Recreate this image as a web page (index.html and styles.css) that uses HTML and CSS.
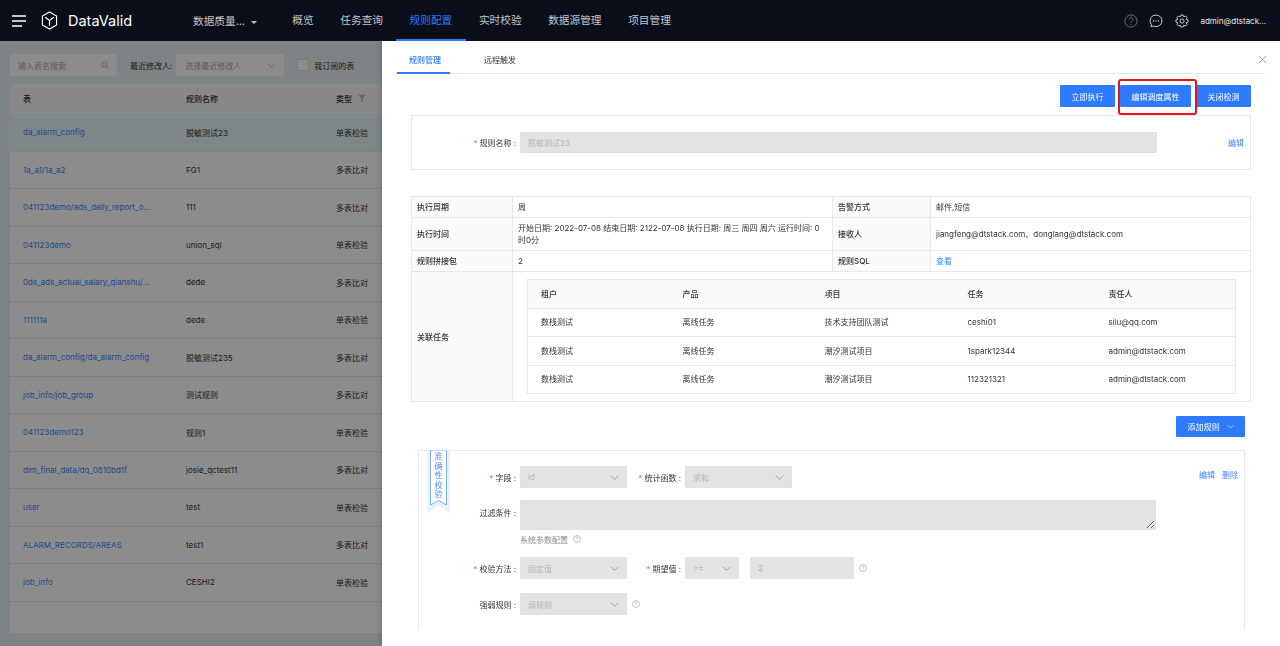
FILE: index.html
```html
<!DOCTYPE html>
<html lang="en">
<head>
    <meta charset="UTF-8">
    <title>DataValid</title>
    <link rel="stylesheet" href="styles.css">
</head>
<body>
    <svg class="sprites" width="0" height="0">
        <symbol id="help" viewBox="0 0 16 16">
            <circle cx="8" cy="8" r="7" fill="none" stroke="currentColor" stroke-width="1"/>
            <path d="M5.9 6.3a2.1 2.1 0 1 1 3.3 1.700c-.8.5-1.200.9-1.200 1.800" fill="none" stroke="currentColor" stroke-width="1"/>
            <circle cx="8" cy="11.800" r=".7" fill="currentColor"/>
        </symbol>
        <symbol id="chevron" viewBox="0 0 12 12">
            <path d="M1 3.500l5 5 5-5" fill="none" stroke="currentColor" stroke-width="1"/>
        </symbol>
    </svg>

    <header class="topbar">
        <svg class="hamburger" viewBox="0 0 14 12" width="14" height="12">
            <path d="M0 1h14M0 6h14M0 11h10" stroke="#fff" stroke-width="1.300"/>
        </svg>
        <svg class="logo" viewBox="0 0 18 20" width="17" height="19">
            <path d="M9 1l7.500 4.300v9.400L9 19l-7.500-4.300V5.300z" fill="none" stroke="#fff" stroke-width="1.200"/>
            <path d="M4.500 6.500L9 10l4.500-3.500M9 10v5.500" fill="none" stroke="#fff" stroke-width="1.200"/>
        </svg>
        <span class="brand">DataValid</span>
        <div class="project-switch">数据质量...<i class="caret"></i></div>
        <nav class="menu">
            <a>概览</a>
            <a>任务查询</a>
            <a class="active">规则配置</a>
            <a>实时校验</a>
            <a>数据源管理</a>
            <a>项目管理</a>
        </nav>
        <div class="tools">
            <svg class="tool" width="14" height="14"><use href="#help"/></svg>
            <svg class="tool" viewBox="0 0 16 16" width="14" height="14">
                <path d="M8 1.200a6.800 6.600 0 0 1 0 13.200c-1.100 0-2.100-.2-3-.7l-2.800.9.700-2.500A6.500 6.500 0 0 1 8 1.200z" fill="none" stroke="currentColor" stroke-width="1.100"/>
                <circle cx="5.200" cy="8" r=".8" fill="currentColor"/>
                <circle cx="8" cy="8" r=".8" fill="currentColor"/>
                <circle cx="10.800" cy="8" r=".8" fill="currentColor"/>
            </svg>
            <svg class="tool" viewBox="0 0 16 16" width="14" height="14">
                <polygon points="14.89,9.22 12.8,9.99 13.73,12.02 12.02,13.73 9.99,12.8 9.22,14.89 6.78,14.89 6.01,12.8 3.98,13.73 2.27,12.02 3.2,9.99 1.11,9.22 1.11,6.78 3.2,6.01 2.27,3.98 3.98,2.27 6.01,3.2 6.78,1.11 9.22,1.11 9.99,3.2 12.02,2.27 13.73,3.98 12.8,6.01 14.89,6.78" fill="none" stroke="currentColor" stroke-width="1.100" stroke-linejoin="round"/>
                <circle cx="8" cy="8" r="2.400" fill="none" stroke="currentColor" stroke-width="1.100"/>
            </svg>
            <span class="user">admin@dtstack...</span>
        </div>
    </header>

    <main class="page">
        <div class="filters">
            <div class="search">
                <span>输入表名搜索</span>
                <svg viewBox="0 0 12 12" width="8" height="8"><circle cx="5" cy="5" r="4" fill="none" stroke="currentColor" stroke-width="1.200"/><path d="M8 8l3.500 3.500" stroke="currentColor" stroke-width="1.200"/></svg>
            </div>
            <label class="filter-label">最近修改人:</label>
            <div class="filter-select">
                <span>选择最近修改人</span>
                <svg width="9" height="9"><use href="#chevron"/></svg>
            </div>
            <i class="checkbox"></i>
            <span class="filter-label">我订阅的表</span>
        </div>
        <div class="rule-list">
            <div class="rule-row head">
                <span class="col-table">表</span>
                <span class="col-name">规则名称</span>
                <span>类型</span>
                <svg class="filter-icon" viewBox="0 0 10 10" width="8" height="8"><path d="M0 1h10L6 5.500V10H4V5.500z" fill="#bfbfbf"/></svg>
            </div>
            <div class="rule-row selected"><a class="col-table">da_alarm_config</a><span class="col-name">脱敏测试23</span><span>单表检验</span></div>
            <div class="rule-row"><a class="col-table">1a_a1/1a_a2</a><span class="col-name">FG1</span><span>多表比对</span></div>
            <div class="rule-row"><a class="col-table">041123demo/ads_daily_report_o...</a><span class="col-name">111</span><span>多表比对</span></div>
            <div class="rule-row"><a class="col-table">041123demo</a><span class="col-name">union_sql</span><span>单表检验</span></div>
            <div class="rule-row"><a class="col-table">0ds_ads_actual_salary_qianshu/...</a><span class="col-name">dede</span><span>多表比对</span></div>
            <div class="rule-row"><a class="col-table">111111a</a><span class="col-name">dede</span><span>单表检验</span></div>
            <div class="rule-row"><a class="col-table">da_alarm_config/da_alarm_config</a><span class="col-name">脱敏测试235</span><span>多表比对</span></div>
            <div class="rule-row"><a class="col-table">job_info/job_group</a><span class="col-name">测试规则</span><span>多表比对</span></div>
            <div class="rule-row"><a class="col-table">041123demo123</a><span class="col-name">规则1</span><span>单表检验</span></div>
            <div class="rule-row"><a class="col-table">dim_final_data/dq_0810bd1f</a><span class="col-name">josie_qctest11</span><span>多表比对</span></div>
            <div class="rule-row"><a class="col-table">user</a><span class="col-name">test</span><span>单表检验</span></div>
            <div class="rule-row"><a class="col-table">ALARM_RECORDS/AREAS</a><span class="col-name">test1</span><span>多表比对</span></div>
            <div class="rule-row"><a class="col-table">job_info</a><span class="col-name">CESHI2</span><span>单表检验</span></div>
        </div>
    </main>
    <div class="mask"></div>

    <aside class="drawer">
        <div class="tabs">
            <a class="tab active">规则管理</a>
            <a class="tab">远程触发</a>
            <svg class="close" viewBox="0 0 10 10" width="9" height="9"><path d="M1 1l8 8M9 1l-8 8" stroke="#999" stroke-width="1"/></svg>
        </div>
        <div class="drawer-body">
            <div class="actions">
                <button class="btn">立即执行</button>
                <button class="btn wide">编辑调度属性</button>
                <button class="btn">关闭检测</button>
                <span class="highlight"></span>
            </div>

            <section class="name-card">
                <label class="field-label name-label"><em>*</em> 规则名称 :</label>
                <div class="disabled-box name-input">脱敏测试23</div>
                <a class="link name-edit">编辑</a>
            </section>

            <table class="info">
                <colgroup><col class="c1"><col class="c2"><col class="c3"><col></colgroup>
                <tr>
                    <th>执行周期</th><td>周</td>
                    <th>告警方式</th><td>邮件,短信</td>
                </tr>
                <tr>
                    <th>执行时间</th><td>开始日期: 2022-07-08 结束日期: 2122-07-08 执行日期: 周三 周四 周六 运行时间: 0时0分</td>
                    <th>接收人</th><td>jiangfeng@dtstack.com、donglang@dtstack.com</td>
                </tr>
                <tr>
                    <th>规则拼接包</th><td>2</td>
                    <th>规则SQL</th><td><a class="link">查看</a></td>
                </tr>
                <tr>
                    <th>关联任务</th>
                    <td colspan="3" class="nested">
                        <table class="tasks">
                            <colgroup><col class="t1"><col class="t1"><col class="t2"><col class="t3"><col></colgroup>
                            <tr class="tasks-head"><th>租户</th><th>产品</th><th>项目</th><th>任务</th><th>责任人</th></tr>
                            <tr><td>数栈测试</td><td>离线任务</td><td>技术支持团队测试</td><td>ceshi01</td><td>silu@qq.com</td></tr>
                            <tr><td>数栈测试</td><td>离线任务</td><td>潮汐测试项目</td><td>1spark12344</td><td>admin@dtstack.com</td></tr>
                            <tr><td>数栈测试</td><td>离线任务</td><td>潮汐测试项目</td><td>112321321</td><td>admin@dtstack.com</td></tr>
                        </table>
                    </td>
                </tr>
            </table>

            <div class="add-row">
                <button class="btn add">添加规则<svg width="7" height="7"><use href="#chevron"/></svg></button>
            </div>

            <section class="rule-card">
                <div class="ribbon">
                    <svg viewBox="0 0 23 63" width="23" height="63">
                        <polygon points="0,0 23,0 23,63 11.500,56 0,63" fill="#e8f3ff"/>
                        <path d="M3.500 0V55L11.500 50.500L19.500 55V0z" fill="#fff" stroke="#7db0ff" stroke-width="1"/>
                    </svg>
                    <span>准确性校验</span>
                </div>
                <div class="rule-links"><a class="link">编辑</a><a class="link">删除</a></div>

                <div class="form-row first">
                    <label class="field-label"><em>*</em> 字段 :</label>
                    <div class="disabled-box select">id<svg width="9" height="9"><use href="#chevron"/></svg></div>
                    <label class="field-label second"><em>*</em> 统计函数 :</label>
                    <div class="disabled-box select">求和<svg width="9" height="9"><use href="#chevron"/></svg></div>
                </div>
                <div class="form-row top">
                    <label class="field-label">过滤条件 :</label>
                    <textarea class="filter-area" disabled></textarea>
                </div>
                <div class="sys-config">系统参数配置<svg class="hint" width="8" height="8"><use href="#help"/></svg></div>
                <div class="form-row third">
                    <label class="field-label"><em>*</em> 校验方法 :</label>
                    <div class="disabled-box select">固定值<svg width="9" height="9"><use href="#chevron"/></svg></div>
                    <label class="field-label second"><em>*</em> 期望值 :</label>
                    <div class="disabled-box select small">&gt;=<svg width="9" height="9"><use href="#chevron"/></svg></div>
                    <div class="disabled-box value">2</div>
                    <svg class="hint" width="8" height="8"><use href="#help"/></svg>
                </div>
                <div class="form-row">
                    <label class="field-label">强弱规则 :</label>
                    <div class="disabled-box select">弱规则<svg width="9" height="9"><use href="#chevron"/></svg></div>
                    <svg class="hint" width="8" height="8"><use href="#help"/></svg>
                </div>
            </section>
        </div>
    </aside>
</body>
</html>
```

FILE: styles.css
```css
html, body {
    height: 100%;
    margin: 0;
    overflow: hidden;
}
body {
    font-family: Inter, "Noto Sans CJK SC", sans-serif;
    font-size: 8px;
    color: #333;
    background-color: #e5eff2;
}
.sprites {
    position: absolute;
}

/* top bar */
.topbar {
    display: flex;
    align-items: center;
    height: 41px;
    background-color: #0a0e1a;
    color: #c4c6cb;
    position: relative;
    z-index: 3;
}
.hamburger {
    margin-left: 12px;
}
.logo {
    margin-left: 15px;
}
.brand {
    margin-left: 10px;
    width: 66px;
    font-size: 14.5px;
    color: #fff;
}
.project-switch {
    margin-left: 59px;
    width: 86px;
    font-size: 10.67px;
    white-space: nowrap;
}
.caret {
    display: inline-block;
    margin-left: 6px;
    vertical-align: middle;
    border: 3px solid transparent;
    border-top: 3px solid #c4c6cb;
    border-bottom: 0;
}
.menu {
    display: flex;
    height: 100%;
    font-size: 10.67px;
}
.menu a {
    display: flex;
    align-items: center;
    padding: 0 13.33px;
    border-bottom: 2px solid transparent;
    white-space: nowrap;
}
.menu a.active {
    color: #2f7bff;
    border-bottom-color: #2f7bff;
}
.tools {
    display: flex;
    align-items: center;
    margin-left: auto;
    padding-right: 14px;
}
.tool {
    margin-right: 11.500px;
    color: #d0d2d6;
}
.tool:first-child {
    color: #77797f;
}
.user {
    color: #e6e6e6;
    white-space: nowrap;
}

/* list behind the drawer */
.page {
    padding: 13px 0 0 10px;
}
.filters {
    display: flex;
    align-items: center;
    height: 22px;
    margin-bottom: 8px;
}
.search, .filter-select {
    display: flex;
    align-items: center;
    justify-content: space-between;
    height: 100%;
    box-sizing: border-box;
    background-color: #fff;
    color: #a8a8a8;
    border-radius: 2px;
}
.search {
    width: 107px;
    padding: 0 8px;
}
.filter-label {
    margin-left: 13px;
    white-space: nowrap;
}
.filter-select {
    width: 108px;
    margin-left: 4px;
    padding: 0 8px 0 9px;
}
.checkbox {
    width: 10px;
    height: 10px;
    margin-left: 13px;
    background-color: #fff;
    border: 1px solid #ddd;
    border-radius: 1px;
}
.checkbox + .filter-label {
    margin-left: 5px;
}
.rule-list {
    width: 1270px;
    height: 549px;
    background-color: #fff;
}
.rule-row {
    display: flex;
    align-items: center;
    height: 37.500px;
    box-sizing: border-box;
    border-bottom: 1px solid #e8e8e8;
    white-space: nowrap;
}
.rule-row.head {
    height: 30px;
    padding-bottom: 2px;
    background-color: #f8f8f8;
    font-weight: 500;
    border-bottom: 0;
}
.rule-row.selected {
    background-color: #e4f5f7;
}
.col-table {
    width: 163px;
    padding-left: 13px;
}
a.col-table {
    color: #3f87ff;
}
.col-name {
    width: 150px;
}
.filter-icon {
    margin-left: 6px;
}
.mask {
    position: fixed;
    top: 41px;
    left: 0;
    right: 0;
    bottom: 0;
    background-color: rgba(0, 0, 0, 0.45);
    z-index: 1;
}

/* drawer */
.drawer {
    position: fixed;
    top: 41px;
    left: 382px;
    right: 0;
    bottom: 0;
    background-color: #fff;
    box-shadow: -2px 0 6px rgba(0, 0, 0, 0.15);
    z-index: 2;
    padding: 0 15px 16px;
    box-sizing: border-box;
    display: flex;
    flex-direction: column;
}
.tabs {
    display: flex;
    align-items: center;
    flex: none;
    height: 32px;
    border-bottom: 1px solid #e8e8e8;
    position: relative;
}
.tab {
    display: flex;
    align-items: center;
    height: 100%;
    width: 53px;
    padding: 6px 0 0 12px;
    margin-right: 10px;
    box-sizing: border-box;
    border-bottom: 2px solid transparent;
    margin-bottom: -1px;
    white-space: nowrap;
}
.tab.active {
    color: #2f7bff;
    font-weight: 500;
    border-bottom-color: #2f7bff;
}
.tab + .tab {
    margin-left: 12px;
}
.close {
    position: absolute;
    right: -2px;
    top: 14px;
}
.drawer-body {
    flex: 1;
    min-height: 0;
    overflow: hidden;
    padding-left: 14px;
    padding-right: 14px;
}
.actions {
    display: flex;
    justify-content: flex-end;
    gap: 5px;
    margin: 11px 0 8px;
    position: relative;
}
.btn {
    height: 22px;
    width: 55px;
    padding: 0;
    border: none;
    border-radius: 1px;
    background-color: #2f7bff;
    color: #fff;
    font: inherit;
}
.btn.wide {
    width: 71px;
}
.highlight {
    position: absolute;
    right: 54px;
    top: -6px;
    width: 75px;
    height: 32px;
    border: 2px solid #e8141c;
    border-radius: 3px;
}
.name-card {
    display: flex;
    align-items: center;
    height: 55px;
    box-sizing: border-box;
    border: 1px solid #e8e8e8;
    margin-bottom: 26px;
}
.field-label {
    flex: none;
    width: 104px;
    text-align: right;
    white-space: nowrap;
}
.field-label em {
    color: #ff5f5c;
    font-style: normal;
}
.name-label {
    margin-right: 4px;
}
.disabled-box {
    display: flex;
    align-items: center;
    height: 21px;
    box-sizing: border-box;
    background-color: #e3e3e3;
    border: 1px solid #e0e0e0;
    border-radius: 1px;
    color: #b4b4b4;
    padding: 0 7px;
}
.name-input {
    width: 637px;
}
.link {
    color: #3f87ff;
}
.name-edit {
    margin-left: 71px;
}
.info {
    width: 100%;
    border-collapse: collapse;
    table-layout: fixed;
    margin-bottom: 14px;
}
.info > tbody > tr > th, .info > tbody > tr > td {
    border: 1px solid #e8e8e8;
    padding: 4px 5px;
    line-height: 12px;
    text-align: left;
    font-weight: 400;
}
.info > tbody > tr > th {
    background-color: #fafafa;
    font-weight: 500;
}
.info > tbody > tr > td.nested {
    padding: 7px 14px;
}
.c1 {
    width: 101px;
}
.c2 {
    width: 320px;
}
.c3 {
    width: 98px;
}
.tasks {
    width: 100%;
    border-collapse: collapse;
    table-layout: fixed;
    border: 1px solid #e8e8e8;
}
.t1 {
    width: 142px;
}
.t2 {
    width: 143px;
}
.t3 {
    width: 141px;
}
.tasks th, .tasks td {
    height: 27.500px;
    padding: 0 0 0 13px;
    text-align: left;
    border-top: 1px solid #e8e8e8;
    font-weight: 400;
}
.tasks-head th {
    background-color: #fafafa;
    font-weight: 500;
    border-top: 0;
}
.add-row {
    display: flex;
    justify-content: flex-end;
    padding-right: 6px;
    margin-bottom: 13px;
}
.btn.add {
    display: flex;
    align-items: center;
    justify-content: center;
    gap: 7px;
    width: 69px;
    height: 21px;
}
.rule-card {
    position: relative;
    margin: 0 6px 0 7px;
    height: 300px;
    padding-top: 15px;
    box-sizing: border-box;
    border: 1px solid #e8e8e8;
}
.ribbon {
    position: absolute;
    top: -1px;
    left: 8px;
    width: 23px;
    height: 63px;
}
.ribbon svg {
    display: block;
}
.ribbon span {
    position: absolute;
    top: 2px;
    left: 0;
    right: 0;
    width: 8px;
    margin: 0 auto;
    line-height: 9.600px;
    color: #4a90ff;
    text-align: center;
}
.rule-links {
    position: absolute;
    top: 18px;
    right: 6px;
    display: flex;
    gap: 7px;
}
.form-row {
    display: flex;
    align-items: center;
    margin-bottom: 13px;
}
.form-row.first {
    margin-bottom: 12px;
}
.form-row.third {
    margin-bottom: 14px;
}
.form-row.top {
    align-items: flex-start;
    margin-bottom: 4px;
}
.form-row .field-label {
    width: 97px;
    margin-right: 4px;
}
.form-row .field-label.second {
    width: 54px;
}
.select {
    justify-content: space-between;
    width: 107px;
    height: 22px;
}
.select.small {
    width: 54px;
}
.value {
    width: 104px;
    height: 22px;
    margin-left: 11px;
}
.select svg {
    color: #8c8c8c;
    flex: none;
}
.filter-area {
    width: 636px;
    height: 30px;
    box-sizing: border-box;
    margin: 0;
    padding: 0;
    background-color: #e3e3e3;
    border: 1px solid #e0e0e0;
    border-radius: 1px;
}
.form-row.top .field-label {
    margin-top: 7px;
}
.sys-config {
    display: flex;
    align-items: center;
    height: 10px;
    margin: 0 0 13px 101px;
    color: #8c8c8c;
}
.hint {
    flex: none;
    margin-left: 5px;
    color: #8c8c8c;
}
```
